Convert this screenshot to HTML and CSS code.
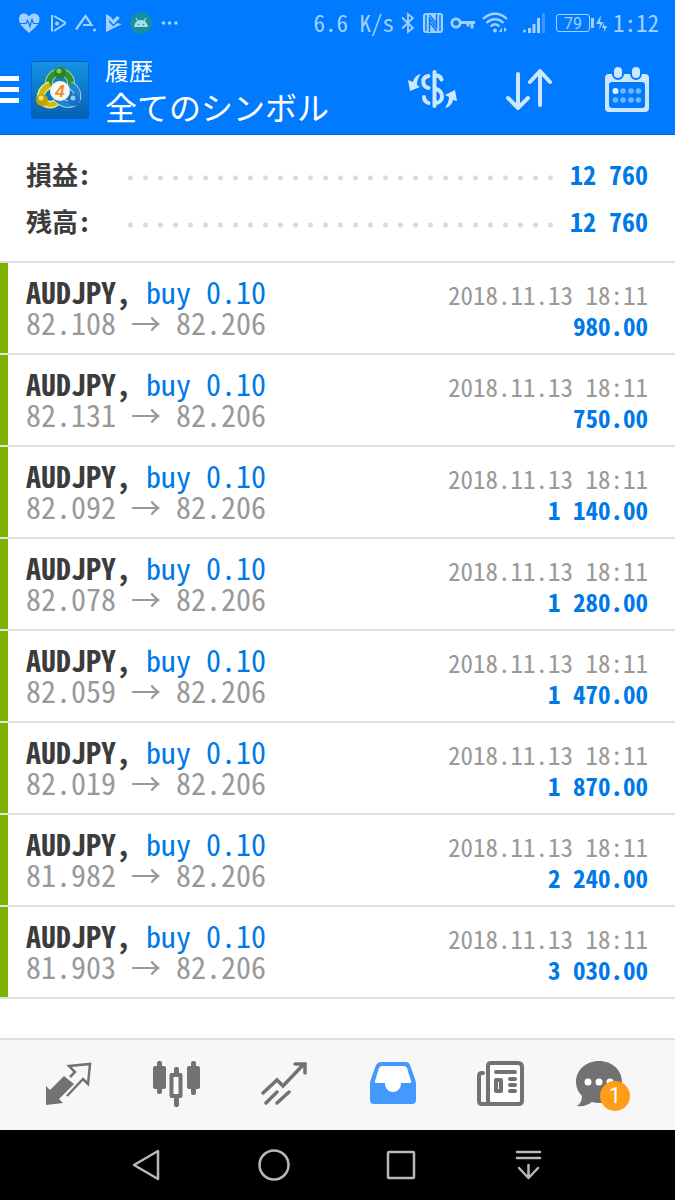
FILE: index.html
```html
<!doctype html>
<html lang="ja">
<head>
<meta charset="utf-8">
<meta name="viewport" content="width=device-width,initial-scale=1.0" />
<title>履歴</title>
<link rel="stylesheet" href="styles.css">
</head>
<body>
  <header class="header">
    <div class="status">
      <div class="status-left">
        <svg width="22" height="22" viewBox="0 0 22 22"><path fill="currentColor" d="M11 21C7 17 1 13 1 7.500C1 3 3.500 1.500 6 1.500C8.500 1.500 10 3 11 4.500C12 3 13.500 1.500 16 1.500C19 1.500 21.500 3.500 21.500 7.500C21.500 13 15 17 11 21z"/><path fill="none" stroke="#007aff" stroke-width="1.200" d="M0 11.500h8l1.500-3 2.500 6 2-7 1.500 4H22"/></svg>
        <svg width="18" height="22" viewBox="0 0 18 22"><g fill="none" stroke="currentColor" stroke-width="2"><path d="M4 3v16.500M6 4l12 7L6 19"/></g><circle cx="9" cy="11.500" r="2" fill="currentColor"/></svg>
        <svg width="22" height="22" viewBox="0 0 22 22"><path fill="none" stroke="currentColor" stroke-width="2.200" d="M2 17.500L11.500 4l6 9H9"/><circle cx="20.500" cy="18" r="1.500" fill="currentColor"/></svg>
        <svg width="18" height="22" viewBox="0 0 18 22"><path fill="currentColor" d="M2 2l5 3 2 3 4-4 3 2-4 5 6 1L2 20z"/><path fill="none" stroke="#007aff" stroke-width="1.500" d="M5 9l4.500 4.500L17 6"/></svg>
        <svg width="22" height="22" viewBox="0 0 22 22"><circle cx="11" cy="11" r="11" fill="#178f9c"/><path fill="#a8dcea" d="M4 15a7 7 0 0 1 14 0z"/><path stroke="#a8dcea" stroke-width="1.200" d="M6 6l2.500 4M16 6l-2.500 4"/><circle cx="8.500" cy="12.500" r=".8" fill="#178f9c"/><circle cx="13.500" cy="12.500" r=".8" fill="#178f9c"/></svg>
        <svg width="18" height="22" viewBox="0 0 18 22"><g fill="currentColor"><circle cx="3.500" cy="11" r="1.800"/><circle cx="9.500" cy="11" r="1.800"/><circle cx="16" cy="11" r="1.800"/></g></svg>
      </div>
      <div class="status-right">
        <span>6.6 K/s</span>
        <svg width="16" height="22" viewBox="0 0 16 22"><path fill="none" stroke="currentColor" stroke-width="1.800" d="M2 5.500l11 10.500-5 4V2l5 4L2 16.500"/></svg>
        <svg width="22" height="22" viewBox="0 0 22 22"><rect x="1" y="1" width="20" height="20" rx="3" fill="currentColor"/><path fill="none" stroke="#007aff" stroke-width="1.500" d="M4 3v16M18 3v16M7.500 20V6.500l7 9V2M7.500 3l7 9M7.500 10l7 9"/></svg>
        <svg width="26" height="22" viewBox="0 0 26 22"><g fill="none" stroke="currentColor" stroke-width="2.800"><circle cx="6" cy="11" r="4.200"/><path d="M10 10.500h15M22 10.500v6M18 10.500v4"/></g></svg>
        <svg width="26" height="22" viewBox="0 0 26 22"><g fill="none" stroke="currentColor" stroke-width="2.300"><path d="M1 7c7-7 17-7 24 0M4.500 11c5-5 12-5 17 0M8.500 14.500c3-3 6-3 9 0"/></g><circle cx="13" cy="18.500" r="2" fill="currentColor"/><path fill="currentColor" d="M20 15v5h-3zM22 15v5l3-2z"/></svg>
        <svg class="signal" width="24" height="22" viewBox="0 0 24 22"><g fill="currentColor"><circle cx="2.500" cy="19" r="1.500"/><rect x="6" y="16" width="3" height="5"/><rect x="10.500" y="12" width="3" height="9"/><rect x="15" y="6" width="3" height="15"/><rect x="20" y="1" width="3" height="20" opacity=".35"/></g></svg>
        <span class="battery">79</span>
        <svg width="11" height="22" viewBox="1 0 11 22"><path fill="currentColor" d="M6 3L1 12h4l-1 6 4-8H5zM9 10l-2 6h2v4l3-6h-3z"/></svg>
        <span>1:12</span>
      </div>
    </div>
    <div class="toolbar">
      <button class="menu" type="button" aria-label="メニュー"><i></i><i></i><i></i></button>
      <svg class="logo" width="58" height="58" viewBox="0 0 58 58">
        <defs>
          <linearGradient id="sky" x1="0" y1="0" x2="0" y2="1"><stop offset="0" stop-color="#1694e2"/><stop offset="1" stop-color="#0560b4"/></linearGradient>
        </defs>
        <rect x=".5" y=".5" width="57" height="57" rx="2" fill="url(#sky)" stroke="#0861b6"/>
        <g fill="none">
          <path stroke="#b7dc9a" stroke-width="8" d="M18 25c-2-18 24-18 22 0"/>
          <path stroke="#358f2f" stroke-width="6" d="M18 25c-2-18 24-18 22 0"/>
          <path stroke="#eee77a" stroke-width="8" d="M19 24c-10 4-11 14-7 17c5 4 11 3 15-1"/>
          <path stroke="#c9b915" stroke-width="5" d="M19 24c-10 4-11 14-7 17c5 4 11 3 15-1"/>
          <path stroke="#a4d6f4" stroke-width="8" d="M39 24c11 6 9 19-2 19c-5 0-9-3-12-6"/>
          <path stroke="#2383cf" stroke-width="6" d="M39 24c11 6 9 19-2 19c-5 0-9-3-12-6"/>
        </g>
        <circle cx="29" cy="12" r="6" fill="#27842a"/>
        <circle cx="28" cy="10" r="2.500" fill="#7cc766"/>
        <circle cx="11" cy="39" r="6" fill="#b9a20b"/>
        <circle cx="10" cy="37" r="2.500" fill="#efe36a"/>
        <circle cx="43" cy="39" r="6" fill="#1a72c0"/>
        <circle cx="42" cy="37" r="2.500" fill="#8fd0f5"/>
        <circle cx="29" cy="30" r="10" fill="#fbf7f0"/>
        <text class="logo-text" x="29" y="36" text-anchor="middle">4</text>
      </svg>
      <h1 class="title"><small>履歴</small>全てのシンボル</h1>
      <button class="tool" type="button" aria-label="通貨">
        <svg width="50" height="46" viewBox="0 0 50 46"><g fill="none" stroke="currentColor" stroke-width="4" stroke-linecap="round"><path d="M26.500 5v34"/><path d="M20.500 9c-7 1-7 10 0 12M16 30c0 3 2 5 4.500 6"/><path d="M28 8.500c3 0 5 2 5.500 4M28 22c8 2 8 13 0 14"/></g><g fill="currentColor"><path d="M13 7C8 8 6 11 5 15L0 13l2 11 10-4-3-2c0-4 1-8 4-11z"/><path d="M37 41c5-1 7-4 8-8l4 1-2-11-10 5 4 2c0 4-2 8-4 11z"/></g></svg>
      </button>
      <button class="tool" type="button" aria-label="並べ替え">
        <svg width="48" height="46" viewBox="0 0 48 46"><path fill="none" stroke="currentColor" stroke-width="4" stroke-linecap="round" stroke-linejoin="round" d="M12 7v34M2 31l10 10 10-10M34 38V4M24 15L34 4l10 11"/></svg>
      </button>
      <button class="tool" type="button" aria-label="カレンダー">
        <svg width="44" height="46" viewBox="0 0 44 46"><path fill="currentColor" fill-rule="evenodd" d="M4 7h36q4 0 4 4v30q0 4-4 4H4q-4 0-4-4V11q0-4 4-4zM7 15q-3 0-3 3v20q0 3 3 3h30q3 0 3-3V18q0-3-3-3z"/><g fill="currentColor" stroke="#007aff" stroke-width="2"><rect x="8" y="-1" width="10" height="13" rx="5"/><rect x="26" y="-1" width="10" height="13" rx="5"/></g><circle cx="10.500" cy="24" r="3" fill="#e4f2ff"/><g fill="#70b5ff"><circle cx="18" cy="24" r="2.800"/><circle cx="26" cy="24" r="2.800"/><circle cx="33.500" cy="24" r="2.800"/><circle cx="10.500" cy="33" r="2.800"/><circle cx="18" cy="33" r="2.800"/><circle cx="26" cy="33" r="2.800"/><circle cx="33.500" cy="33" r="2.800"/></g></svg>
      </button>
    </div>
  </header>

  <main class="main">
    <dl class="summary">
      <div><dt>損益:</dt><dd>12 760</dd></div>
      <div><dt>残高:</dt><dd>12 760</dd></div>
    </dl>
    <ul class="deals">
      <li><div class="deal">
        <p><b>AUDJPY,</b> <em>buy 0.10</em><span class="prices">82.108 <i>→</i> 82.206</span></p>
        <p class="result"><time>2018.11.13 18:11</time><strong>980.00</strong></p>
      </div></li>
      <li><div class="deal">
        <p><b>AUDJPY,</b> <em>buy 0.10</em><span class="prices">82.131 <i>→</i> 82.206</span></p>
        <p class="result"><time>2018.11.13 18:11</time><strong>750.00</strong></p>
      </div></li>
      <li><div class="deal">
        <p><b>AUDJPY,</b> <em>buy 0.10</em><span class="prices">82.092 <i>→</i> 82.206</span></p>
        <p class="result"><time>2018.11.13 18:11</time><strong>1 140.00</strong></p>
      </div></li>
      <li><div class="deal">
        <p><b>AUDJPY,</b> <em>buy 0.10</em><span class="prices">82.078 <i>→</i> 82.206</span></p>
        <p class="result"><time>2018.11.13 18:11</time><strong>1 280.00</strong></p>
      </div></li>
      <li><div class="deal">
        <p><b>AUDJPY,</b> <em>buy 0.10</em><span class="prices">82.059 <i>→</i> 82.206</span></p>
        <p class="result"><time>2018.11.13 18:11</time><strong>1 470.00</strong></p>
      </div></li>
      <li><div class="deal">
        <p><b>AUDJPY,</b> <em>buy 0.10</em><span class="prices">82.019 <i>→</i> 82.206</span></p>
        <p class="result"><time>2018.11.13 18:11</time><strong>1 870.00</strong></p>
      </div></li>
      <li><div class="deal">
        <p><b>AUDJPY,</b> <em>buy 0.10</em><span class="prices">81.982 <i>→</i> 82.206</span></p>
        <p class="result"><time>2018.11.13 18:11</time><strong>2 240.00</strong></p>
      </div></li>
      <li><div class="deal">
        <p><b>AUDJPY,</b> <em>buy 0.10</em><span class="prices">81.903 <i>→</i> 82.206</span></p>
        <p class="result"><time>2018.11.13 18:11</time><strong>3 030.00</strong></p>
      </div></li>
    </ul>
  </main>

  <nav class="tabs">
    <button type="button" aria-label="気配値">
      <svg width="48" height="48" viewBox="0 0 48 48"><path fill="currentColor" d="M1 25l4 4 14-14 10 8-15 15 4 4-17 2z"/><path fill="none" stroke="currentColor" stroke-width="2.500" d="M25 16l5-5-6-6 21-2-2 20-5-5-16 17"/></svg>
    </button>
    <button type="button" aria-label="チャート">
      <svg width="48" height="48" viewBox="0 0 48 48"><g fill="currentColor"><rect x="0" y="5" width="13" height="23" rx="2"/><rect x="4" y="0" width="5" height="33" rx="2"/><rect x="34" y="5" width="13" height="23" rx="2"/><rect x="38" y="0" width="5" height="34" rx="2"/><rect x="21" y="6" width="5" height="8" rx="2"/><rect x="21" y="34" width="5" height="12" rx="2"/></g><rect x="18.500" y="14" width="9" height="21" fill="#fff" stroke="currentColor" stroke-width="4" stroke-linejoin="round"/></svg>
    </button>
    <button type="button" aria-label="トレード">
      <svg width="48" height="48" viewBox="0 0 48 48"><path fill="none" stroke="currentColor" stroke-width="3.500" stroke-linecap="round" d="M2 32l14-13 6 6L42 4M34 3h10v9M5 42l11-11M16 42l12-11"/></svg>
    </button>
    <button class="active" type="button" aria-label="履歴">
      <svg width="46" height="48" viewBox="0 0 46 48"><path fill="currentColor" d="M11 1h25q3 0 4 3l5 14q1 3 1 5v16q0 4-4 4H4q-4 0-4-4V23q0-3 1-5L6 4q2-3 5-3z"/><path fill="#fff" d="M12 5h22q2 0 3 2l4 13q1 2-2 2h-8c0 12-16 12-16 0H7q-3 0-2-2L9 7q1-2 3-2z"/></svg>
    </button>
    <button type="button" aria-label="ニュース">
      <svg width="48" height="48" viewBox="0 0 48 48"><g fill="none" stroke="currentColor" stroke-width="4" stroke-linecap="round" stroke-linejoin="round"><path fill="#fff" d="M14 2h27q4 0 4 4v34q0 3-4 3H14q-3 0-3-3V5q0-3 3-3z"/><path d="M6 12H5q-3 0-3 3v25q0 3 3 3h9M19 11h19M33 18h5M33 24h5M33 30h5"/><path d="M19 19h5v11h-5z"/></g></svg>
    </button>
    <button type="button" aria-label="メッセージ">
      <span class="messages">
        <svg width="46" height="48" viewBox="0 0 46 48"><path fill="currentColor" d="M23 0c13 0 23 9 23 21s-10 21-23 21q-4 0-7-1q-6 5-15 4q5-3 5-10Q0 29 0 21C0 9 10 0 23 0z"/><g fill="#fff"><circle cx="12" cy="21" r="3.500"/><circle cx="23" cy="21" r="3.500"/><circle cx="34" cy="21" r="3.500"/></g></svg>
        <span class="badge">1</span>
      </span>
    </button>
  </nav>

  <nav class="system">
    <button type="button" aria-label="戻る"><svg width="32" height="32" viewBox="0 0 32 32"><path d="M28 2v28L4 16z"/></svg></button>
    <button type="button" aria-label="ホーム"><svg width="32" height="32" viewBox="0 0 32 32"><circle cx="16" cy="16" r="14.500"/></svg></button>
    <button type="button" aria-label="アプリ一覧"><svg width="32" height="32" viewBox="0 0 32 32"><rect x="3" y="3" width="26" height="26" rx="1"/></svg></button>
    <button type="button" aria-label="通知パネル"><svg width="32" height="32" viewBox="0 0 32 32"><path d="M4 3h23M4 9h23M15.500 16v13M6 19l9.500 10L25 19"/></svg></button>
  </nav>
</body>
</html>
```
FILE: styles.css
```css
* {
  box-sizing: border-box;
}

body {
  display: flex;
  flex-direction: column;
  min-height: 100vh;
  margin: 0;
  background: #fff;
  color: #3c3c3c;
  font-family: "Noto Sans CJK JP", sans-serif;
  font-feature-settings: "hwid";
}

button {
  display: flex;
  align-items: center;
  justify-content: center;
  padding: 0;
  border: 0;
  background: none;
  color: inherit;
  font: inherit;
}

svg {
  display: block;
  flex: none;
}

/* header */

.header {
  background: #007aff;
  border-bottom: 1px solid #0a6bdc;
  color: #fff;
}

.status {
  display: flex;
  justify-content: space-between;
  align-items: center;
  height: 45px;
  padding: 0 16px 0 18px;
  color: #a3d0ff;
  font-size: 23px;
  line-height: 45px;
}

.status-left {
  display: flex;
  gap: 8px;
}

.status-right {
  display: flex;
  align-items: center;
  gap: 6px;
}

.signal {
  margin: 0 4px 0 8px;
}

.battery {
  position: relative;
  width: 34px;
  height: 18px;
  border: 1px solid;
  border-radius: 3px;
  font-family: Roboto, sans-serif;
  font-size: 16px;
  line-height: 17px;
  text-align: center;
}

.battery::after {
  content: "";
  position: absolute;
  top: 3px;
  right: -5px;
  width: 3px;
  height: 10px;
  background: currentColor;
}

.toolbar {
  display: flex;
  align-items: center;
  height: 89px;
}

.menu {
  flex-direction: column;
  align-items: stretch;
  gap: 6px;
  width: 19px;
  height: 58px;
  margin-right: 12px;
}

.menu i {
  height: 5px;
  background: #fff;
}

.logo-text {
  fill: #ee8d2c;
  font: italic bold 17px "Liberation Sans", sans-serif;
}

.title {
  flex: 1;
  margin: 0 0 0 16px;
  font-size: 32px;
  font-weight: 400;
  line-height: 40px;
  white-space: nowrap;
}

.title small {
  display: block;
  font-size: 24px;
  line-height: 32px;
}

.tool {
  width: 97px;
  height: 89px;
  color: #cfe6ff;
}

/* history */

.main {
  flex: 1;
}

.summary {
  margin: 0;
  padding: 15px 27px 17px 26px;
  border-bottom: 2px solid #e0e0e0;
  font-size: 26px;
  font-weight: 700;
  line-height: 47px;
}

.summary div {
  display: flex;
  align-items: center;
}

.summary dt {
  width: 97px;
}

.summary dd {
  display: flex;
  flex: 1;
  align-items: center;
  margin: 0;
  color: #0079e8;
}

.summary dd::before {
  content: "";
  flex: 1;
  height: 20px;
  margin-right: 12px;
  background: radial-gradient(circle, #dadada 2px, transparent 3px) 0 8px / 15px 12px repeat-x;
}

.deals {
  margin: 0;
  padding: 0;
  list-style: none;
}

.deals li {
  border-bottom: 2px solid #e0e0e0;
}

.deal {
  display: flex;
  justify-content: space-between;
  padding: 13px 27px 12px 18px;
  border-left: 8px solid #7fb200;
  font-size: 30px;
  line-height: 31px;
}

.deal p {
  margin: 0;
}

.deal em {
  color: #0079e8;
  font-style: normal;
}

.prices {
  display: block;
  color: #999;
}

.prices i {
  font-style: normal;
  font-feature-settings: normal;
}

.result {
  padding-top: 3px;
  font-size: 25px;
  text-align: right;
}

.result time,
.result strong {
  display: block;
}

.result time {
  color: #999;
}

.result strong {
  color: #0079e8;
}

/* bottom bars */

.tabs {
  display: grid;
  grid-template-columns: repeat(6, 1fr);
  height: 92px;
  padding: 0 12px 0 15px;
  border-top: 2px solid #e0e0e0;
  background: #f7f7f7;
  color: #727272;
}

.tabs .active {
  color: #4499ff;
}

.messages {
  position: relative;
  padding-right: 20px;
}

.badge {
  position: absolute;
  right: 12px;
  bottom: -2px;
  width: 30px;
  height: 30px;
  border-radius: 50%;
  background: #ff9c1a;
  color: #fff;
  font-family: Roboto, sans-serif;
  font-size: 22px;
  line-height: 30px;
}

.system {
  display: grid;
  grid-template-columns: repeat(4, 1fr);
  height: 70px;
  padding: 0 82px;
  background: #000;
}

.system svg {
  fill: none;
  stroke: #b8b8b8;
  stroke-width: 2.5;
  stroke-linecap: round;
  stroke-linejoin: round;
}
```
